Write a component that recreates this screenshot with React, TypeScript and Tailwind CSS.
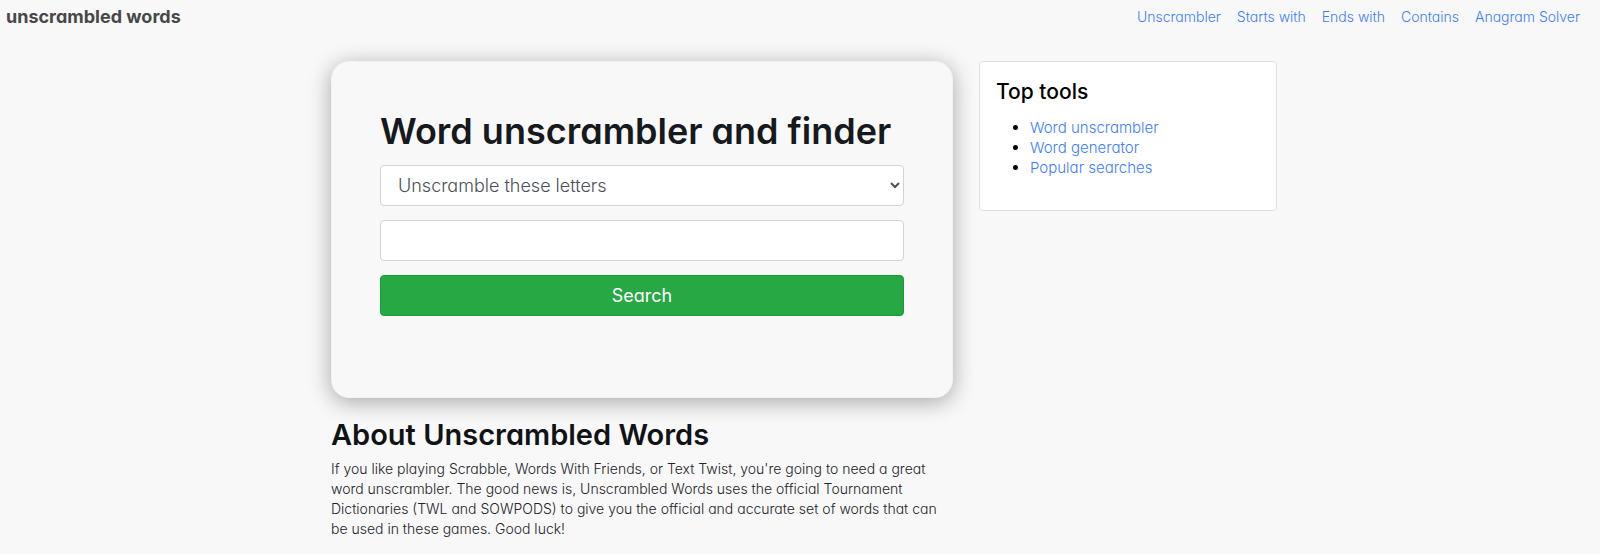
const navLinks = [
  { label: 'Unscrambler', href: '#unscrambler' },
  { label: 'Starts with', href: '#starts-with' },
  { label: 'Ends with', href: '#ends-with' },
  { label: 'Contains', href: '#contains' },
  { label: 'Anagram Solver', href: '#anagram-solver' },
];

const tools = [
  { label: 'Word unscrambler', href: '#word-unscrambler' },
  { label: 'Word generator', href: '#word-generator' },
  { label: 'Popular searches', href: '#popular-searches' },
];

function Header() {
  return (
    <header className="flex items-center justify-between pl-[6px] pr-5 pt-[6px]">
      <a href="#home" className="text-[18px] leading-[21px] font-bold text-[#484848]">
        unscrambled words
      </a>
      <nav className="flex gap-4">
        {navLinks.map((link) => (
          <a key={link.href} href={link.href} className="text-[14px] leading-[21px] text-[#3c7dff] hover:underline">
            {link.label}
          </a>
        ))}
      </nav>
    </header>
  );
}

function SearchCard() {
  return (
    <section className="rounded-[18px] border border-[#f2f2f2] bg-[#f8f8f8] px-12 pt-[49px] pb-[81px] shadow-[0_4px_22px_rgba(0,0,0,0.33)]">
      <h1 className="mb-[13px] text-[36px] leading-[41px] font-semibold text-[#16191d]">Word unscrambler and finder</h1>
      <form className="flex flex-col gap-[14px]" onSubmit={(e) => e.preventDefault()}>
        <select
          aria-label="Search type"
          className="h-[41px] w-full rounded border border-[#ced4da] bg-white px-[13px] text-[18px] text-[#495057]"
        >
          <option>Unscramble these letters</option>
        </select>
        <input
          type="text"
          aria-label="Letters"
          className="h-[41px] w-full rounded border border-[#ced4da] bg-white px-[13px] text-[18px] text-[#495057]"
        />
        <button type="submit" className="h-[41px] w-full rounded border border-[#12a035] bg-[#28a745] text-[18px] font-normal text-white">
          Search
        </button>
      </form>
    </section>
  );
}

function TopTools() {
  return (
    <aside className="rounded border border-[#dfdfdf] bg-white px-4 pt-4 pb-8">
      <h2 className="mb-[13px] text-[21px] leading-[27px] font-medium text-black">Top tools</h2>
      <ul className="list-disc pl-[34px] text-[15px] leading-[20px] text-black">
        {tools.map((tool) => (
          <li key={tool.href}>
            <a href={tool.href} className="text-[#3c7dff] hover:underline">
              {tool.label}
            </a>
          </li>
        ))}
      </ul>
    </aside>
  );
}

export default function App() {
  return (
    <div className="min-h-screen bg-[#f8f8f8] font-['Inter','Liberation_Sans',sans-serif] font-light [font-feature-settings:'cv11']">
      <Header />
      <div className="pt-[34px] pl-2">
        <main className="mx-auto grid max-w-[946px] items-start gap-[26px] md:grid-cols-[622fr_298fr]">
          <div>
            <SearchCard />
            <section className="pt-5">
              <h2 className="mb-[7px] text-[29px] leading-[34px] font-semibold text-[#101316]">About Unscrambled Words</h2>
              <p className="text-[14px] leading-[20px] text-[#212529]">
                If you like playing Scrabble, Words With Friends, or Text Twist, you're going to need a great word
                unscrambler. The good news is, Unscrambled Words uses the official Tournament Dictionaries (TWL and
                SOWPODS) to give you the official and accurate set of words that can be used in these games. Good luck!
              </p>
            </section>
          </div>
          <TopTools />
        </main>
      </div>
    </div>
  );
}
